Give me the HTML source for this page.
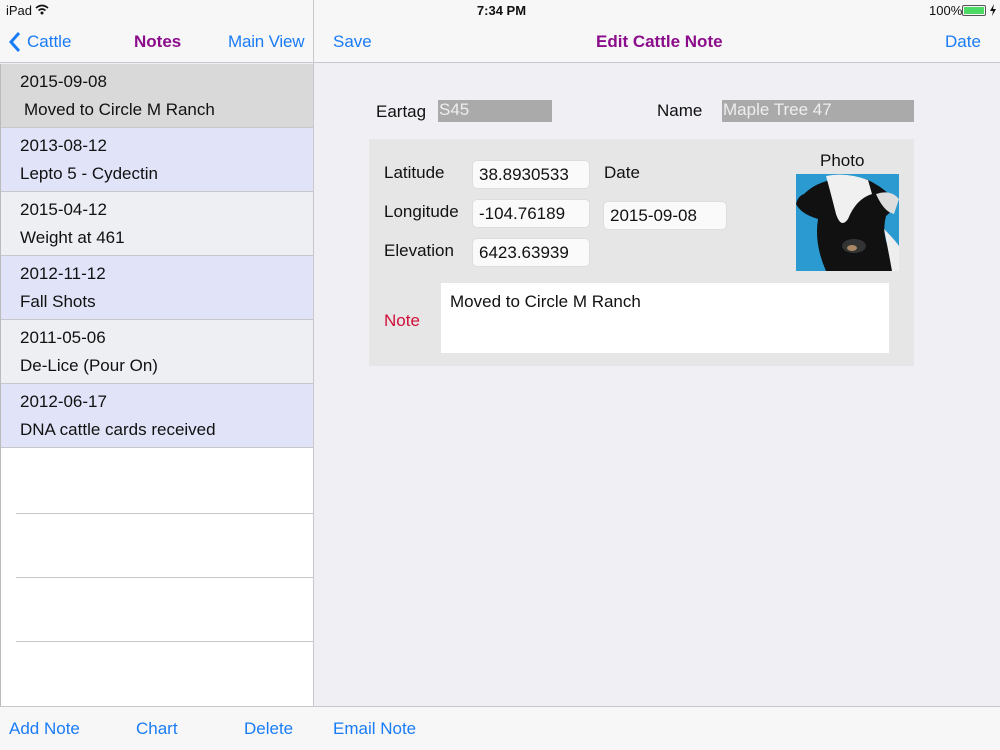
<!DOCTYPE html><html><head><style>
*{margin:0;padding:0;box-sizing:border-box}
body{width:1000px;height:750px;position:relative;overflow:hidden;font-family:"Liberation Sans",sans-serif;background:#efeff4;color:#111}
.a{position:absolute}
.blue{color:#1a7cf5}
.row{position:absolute;left:1px;width:312px;height:64px;border-bottom:1px solid #c8c8cc}
.row .d{position:absolute;left:19px;top:8px;font-size:17px}
.row .t{position:absolute;left:19px;top:36px;font-size:17px}
.f{position:absolute;background:#fafafa;border:1px solid #ddd;border-radius:5px;font-size:17px;padding:4px 6px;height:29px}
.l{position:absolute;font-size:17px}
</style></head><body>
<div class="a" style="left:0;top:0;width:1000px;height:63px;background:#f7f7f7;border-bottom:1px solid #c8c8cc"></div>
<div class="a" style="left:6px;top:3px;font-size:13px">iPad</div>
<svg class="a" style="left:35px;top:4px" width="14" height="11"><path d="M1 4 Q7 -1 13 4" stroke="#111" stroke-width="1.6" fill="none"/><path d="M3.5 6.5 Q7 3.5 10.5 6.5" stroke="#111" stroke-width="1.6" fill="none"/><circle cx="7" cy="9" r="1.5" fill="#111"/></svg>
<div class="a" style="left:0;top:3px;width:1003px;text-align:center;font-size:13px;font-weight:bold">7:34 PM</div>
<div class="a" style="left:929px;top:3px;font-size:13px">100%</div>
<div class="a" style="left:962px;top:5px;width:24px;height:11px;border:1px solid #555;border-radius:2px;padding:1px"><div style="background:#4cd964;width:100%;height:100%"></div></div>
<svg class="a" style="left:989px;top:4px" width="8" height="12"><path d="M5 0 L1 7 H4 L3 12 L7 5 H4Z" fill="#111"/></svg>
<svg class="a" style="left:8px;top:31px" width="14" height="22"><path d="M11 2 L3 11 L11 20" stroke="#1a7cf5" stroke-width="3" fill="none"/></svg>
<div class="a blue" style="left:27px;top:32px;font-size:17px">Cattle</div>
<div class="a" style="left:134px;top:32px;font-size:17px;font-weight:bold;color:#8b0d8b">Notes</div>
<div class="a blue" style="left:228px;top:32px;font-size:17px;letter-spacing:-0.2px">Main View</div>
<div class="a blue" style="left:333px;top:32px;font-size:17px">Save</div>
<div class="a" style="left:596px;top:32px;font-size:17px;font-weight:bold;color:#8b0d8b">Edit Cattle Note</div>
<div class="a blue" style="left:945px;top:32px;font-size:17px">Date</div>
<div class="a" style="left:0;top:64px;width:313px;height:642px;background:#fff;border-left:1px solid #bbb"></div>
<div class="a" style="left:313px;top:0;width:1px;height:750px;background:#c8c8cc"></div>
<div class="row" style="top:64px;background:#d9d9d9"><div class="d">2015-09-08</div><div class="t" style="left:23px">Moved to Circle M Ranch</div></div>
<div class="row" style="top:128px;background:#e1e4f8"><div class="d">2013-08-12</div><div class="t">Lepto 5 - Cydectin</div></div>
<div class="row" style="top:192px;background:#eeeff3"><div class="d">2015-04-12</div><div class="t">Weight at 461</div></div>
<div class="row" style="top:256px;background:#e1e4f8"><div class="d">2012-11-12</div><div class="t">Fall Shots</div></div>
<div class="row" style="top:320px;background:#eeeff3"><div class="d">2011-05-06</div><div class="t">De-Lice (Pour On)</div></div>
<div class="row" style="top:384px;background:#e1e4f8"><div class="d">2012-06-17</div><div class="t">DNA cattle cards received</div></div>
<div class="a" style="left:16px;top:513px;width:297px;height:1px;background:#c8c8cc"></div>
<div class="a" style="left:16px;top:577px;width:297px;height:1px;background:#c8c8cc"></div>
<div class="a" style="left:16px;top:641px;width:297px;height:1px;background:#c8c8cc"></div>
<div class="a" style="left:0;top:706px;width:1000px;height:44px;background:#f7f7f7;border-top:1px solid #c8c8cc"></div>
<div class="a blue" style="left:9px;top:719px;font-size:17px">Add Note</div>
<div class="a blue" style="left:136px;top:719px;font-size:17px">Chart</div>
<div class="a blue" style="left:244px;top:719px;font-size:17px">Delete</div>
<div class="a blue" style="left:333px;top:719px;font-size:17px">Email Note</div>
<div class="l" style="left:376px;top:102px">Eartag</div>
<div class="a" style="left:438px;top:100px;width:114px;height:22px;background:#aaa;color:#eee;font-size:17px;padding-left:1px">S45</div>
<div class="l" style="left:657px;top:101px">Name</div>
<div class="a" style="left:722px;top:100px;width:192px;height:22px;background:#aaa;color:#eee;font-size:17px;padding-left:1px">Maple Tree 47</div>
<div class="a" style="left:369px;top:139px;width:545px;height:227px;background:#e6e6e6"></div>
<div class="l" style="left:384px;top:163px">Latitude</div>
<div class="l" style="left:384px;top:202px">Longitude</div>
<div class="l" style="left:384px;top:241px">Elevation</div>
<div class="f" style="left:472px;top:160px;width:118px">38.8930533</div>
<div class="f" style="left:472px;top:199px;width:118px">-104.76189</div>
<div class="f" style="left:472px;top:238px;width:118px">6423.63939</div>
<div class="l" style="left:604px;top:163px">Date</div>
<div class="f" style="left:603px;top:201px;width:124px">2015-09-08</div>
<div class="l" style="left:820px;top:151px">Photo</div>
<svg class="a" style="left:796px;top:174px" width="103" height="97">
<rect width="103" height="97" fill="#2a9ad0"/>
<path d="M8 20 Q20 8 40 5 L70 5 Q85 12 95 22 Q103 32 90 42 Q85 60 95 80 L103 97 L30 97 Q18 70 22 45 Q5 40 0 30 Q2 22 8 20Z" fill="#111"/>
<path d="M30 2 Q50 -2 72 6 L76 20 Q60 25 52 45 Q45 55 40 40 Q35 20 30 2Z" fill="#f0f0f0"/>
<path d="M80 20 Q95 15 103 25 L98 40 Q88 38 80 20Z" fill="#ddd"/>
<path d="M88 55 Q98 65 103 72 L103 97 L96 97 Q92 75 88 55Z" fill="#eee"/>
<ellipse cx="58" cy="72" rx="12" ry="7" fill="#333"/>
<ellipse cx="56" cy="74" rx="5" ry="3" fill="#a86"/>
</svg>
<div class="l" style="left:384px;top:311px;color:#d0103a">Note</div>
<div class="a" style="left:441px;top:283px;width:448px;height:70px;background:#fff;font-size:17px;padding:9px 9px">Moved to Circle M Ranch</div>
</body></html>
